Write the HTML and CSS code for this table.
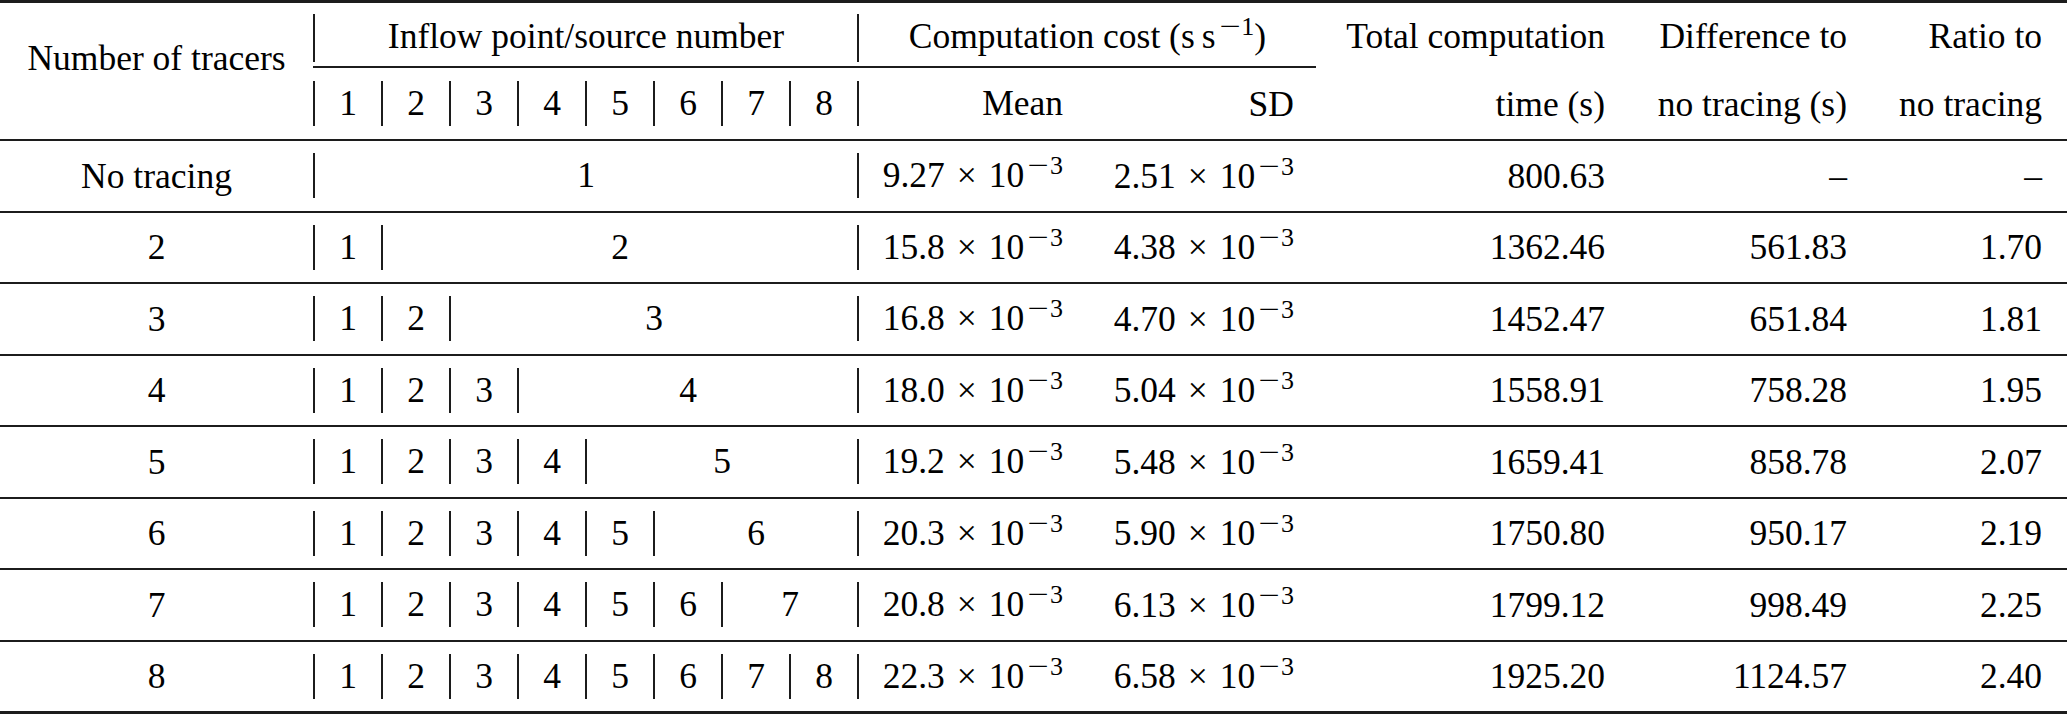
FILE: index.html
```html
<!DOCTYPE html>
<html lang="en">
<head>
<meta charset="utf-8">
<title>Computation cost of tracers</title>
<link rel="stylesheet" href="styles.css">
</head>
<body>
<div class="table">
  <div class="thead">
    <div class="th-label">Number of tracers</div>
    <div class="th-group g-inflow"><div class="h1">Inflow point/source number</div></div>
    <div class="th-group g-cost"><div class="h1">Computation cost (s&thinsp;s<sup class="sup"><span class="mi">−</span>1</sup>)</div></div>
    <div class="th-r1 c-total">Total computation</div>
    <div class="th-r1 c-diff">Difference to</div>
    <div class="th-r1 c-ratio">Ratio to</div>
    <div class="vb r2">1</div>
    <div class="vb r2">2</div>
    <div class="vb r2">3</div>
    <div class="vb r2">4</div>
    <div class="vb r2">5</div>
    <div class="vb r2">6</div>
    <div class="vb r2">7</div>
    <div class="vb r2">8</div>
    <div class="vb r2 num">Mean</div>
    <div class="r2 num">SD</div>
    <div class="r2 num">time (s)</div>
    <div class="r2 num">no tracing (s)</div>
    <div class="r2 num">no tracing</div>
  </div>

  <div class="row">
    <div class="lab">No tracing</div>
    <div class="vb s8">1</div>
    <div class="vb num">9.27<span class="op">×</span>10<sup class="sup"><span class="mi">−</span>3</sup></div>
    <div class="num">2.51<span class="op">×</span>10<sup class="sup"><span class="mi">−</span>3</sup></div>
    <div class="num">800.63</div>
    <div class="num">–</div>
    <div class="num">–</div>
  </div>

  <div class="row">
    <div class="lab">2</div>
    <div class="vb">1</div>
    <div class="vb s7">2</div>
    <div class="vb num">15.8<span class="op">×</span>10<sup class="sup"><span class="mi">−</span>3</sup></div>
    <div class="num">4.38<span class="op">×</span>10<sup class="sup"><span class="mi">−</span>3</sup></div>
    <div class="num">1362.46</div>
    <div class="num">561.83</div>
    <div class="num">1.70</div>
  </div>

  <div class="row">
    <div class="lab">3</div>
    <div class="vb">1</div>
    <div class="vb">2</div>
    <div class="vb s6">3</div>
    <div class="vb num">16.8<span class="op">×</span>10<sup class="sup"><span class="mi">−</span>3</sup></div>
    <div class="num">4.70<span class="op">×</span>10<sup class="sup"><span class="mi">−</span>3</sup></div>
    <div class="num">1452.47</div>
    <div class="num">651.84</div>
    <div class="num">1.81</div>
  </div>

  <div class="row">
    <div class="lab">4</div>
    <div class="vb">1</div>
    <div class="vb">2</div>
    <div class="vb">3</div>
    <div class="vb s5">4</div>
    <div class="vb num">18.0<span class="op">×</span>10<sup class="sup"><span class="mi">−</span>3</sup></div>
    <div class="num">5.04<span class="op">×</span>10<sup class="sup"><span class="mi">−</span>3</sup></div>
    <div class="num">1558.91</div>
    <div class="num">758.28</div>
    <div class="num">1.95</div>
  </div>

  <div class="row">
    <div class="lab">5</div>
    <div class="vb">1</div>
    <div class="vb">2</div>
    <div class="vb">3</div>
    <div class="vb">4</div>
    <div class="vb s4">5</div>
    <div class="vb num">19.2<span class="op">×</span>10<sup class="sup"><span class="mi">−</span>3</sup></div>
    <div class="num">5.48<span class="op">×</span>10<sup class="sup"><span class="mi">−</span>3</sup></div>
    <div class="num">1659.41</div>
    <div class="num">858.78</div>
    <div class="num">2.07</div>
  </div>

  <div class="row">
    <div class="lab">6</div>
    <div class="vb">1</div>
    <div class="vb">2</div>
    <div class="vb">3</div>
    <div class="vb">4</div>
    <div class="vb">5</div>
    <div class="vb s3">6</div>
    <div class="vb num">20.3<span class="op">×</span>10<sup class="sup"><span class="mi">−</span>3</sup></div>
    <div class="num">5.90<span class="op">×</span>10<sup class="sup"><span class="mi">−</span>3</sup></div>
    <div class="num">1750.80</div>
    <div class="num">950.17</div>
    <div class="num">2.19</div>
  </div>

  <div class="row">
    <div class="lab">7</div>
    <div class="vb">1</div>
    <div class="vb">2</div>
    <div class="vb">3</div>
    <div class="vb">4</div>
    <div class="vb">5</div>
    <div class="vb">6</div>
    <div class="vb s2">7</div>
    <div class="vb num">20.8<span class="op">×</span>10<sup class="sup"><span class="mi">−</span>3</sup></div>
    <div class="num">6.13<span class="op">×</span>10<sup class="sup"><span class="mi">−</span>3</sup></div>
    <div class="num">1799.12</div>
    <div class="num">998.49</div>
    <div class="num">2.25</div>
  </div>

  <div class="row last">
    <div class="lab">8</div>
    <div class="vb">1</div>
    <div class="vb">2</div>
    <div class="vb">3</div>
    <div class="vb">4</div>
    <div class="vb">5</div>
    <div class="vb">6</div>
    <div class="vb">7</div>
    <div class="vb">8</div>
    <div class="vb num">22.3<span class="op">×</span>10<sup class="sup"><span class="mi">−</span>3</sup></div>
    <div class="num">6.58<span class="op">×</span>10<sup class="sup"><span class="mi">−</span>3</sup></div>
    <div class="num">1925.20</div>
    <div class="num">1124.57</div>
    <div class="num">2.40</div>
  </div>
</div>
</body>
</html>
```

FILE: styles.css
```css
html, body {
  margin: 0;
  padding: 0;
  background: #ffffff;
}

body {
  font-family: "Liberation Serif", "Times New Roman", Times, serif;
  font-size: 35.5px;
  color: #000;
  line-height: normal;
}

.table {
  width: 2067px;
}

.thead,
.row {
  display: grid;
  grid-template-columns: 313px repeat(8, 68px) 228px 231px 311px 242px 195px 1fr;
  box-sizing: border-box;
}

/* ---------- header ---------- */
.thead {
  grid-template-rows: 65px 71px;
  border-top: 3px solid #1c1c1c;
  border-bottom: 2px solid #1c1c1c;
}

.th-label {
  grid-column: 1;
  grid-row: 1 / 3;
  display: flex;
  align-items: center;
  justify-content: center;
  padding-bottom: 26px;
  white-space: nowrap;
}

.th-group {
  grid-row: 1;
  display: flex;
  align-items: flex-end;
  border-bottom: 2px solid #1c1c1c;
}

.g-inflow { grid-column: 2 / 10; }
.g-cost { grid-column: 10 / 12; }

.th-group .h1 {
  flex: 1;
  height: 48px;
  margin-bottom: 4px;
  padding-bottom: 3px;
  box-sizing: border-box;
  border-left: 2px solid #1c1c1c;
  line-height: 45px;
  text-align: center;
  white-space: nowrap;
}

.th-r1 {
  grid-row: 1;
  display: flex;
  align-items: center;
  justify-content: flex-end;
  padding-right: 22px;
  white-space: nowrap;
}

.c-total { grid-column: 12; }
.c-diff { grid-column: 13; }
.c-ratio { grid-column: 14; }

.r2 {
  grid-row: 2;
  align-self: center;
}

/* ---------- body rows ---------- */
.row {
  height: 71.5px;
  align-items: center;
  border-bottom: 2px solid #1c1c1c;
}

.row.last {
  height: 72.5px;
  border-bottom-width: 3px;
}

.lab {
  grid-column: 1;
  text-align: center;
  white-space: nowrap;
}

/* cell with a vertical column rule on its left */
.vb {
  height: 45px;
  line-height: 45px;
  border-left: 2px solid #1c1c1c;
  text-align: center;
  white-space: nowrap;
}

.num {
  text-align: right;
  padding-right: 22px;
  white-space: nowrap;
}

.s8 { grid-column: span 8; }
.s7 { grid-column: span 7; }
.s6 { grid-column: span 6; }
.s5 { grid-column: span 5; }
.s4 { grid-column: span 4; }
.s3 { grid-column: span 3; }
.s2 { grid-column: span 2; }

.op {
  margin: 0 12px;
}

.sup {
  font-size: 26px;
  line-height: 0;
  vertical-align: 13px;
  margin-left: 3px;
}

/* math minus: wider bar, as in the typeset original */
.mi {
  display: inline-block;
  margin: 0 4px;
  transform: scaleX(1.45);
}
```
